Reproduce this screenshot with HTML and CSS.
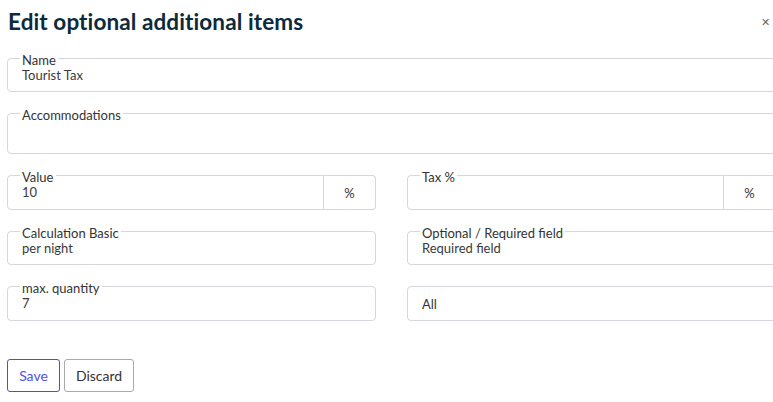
FILE: index.html
```html
<!DOCTYPE html>
<html>
<head>
<meta charset="utf-8">
<link rel="stylesheet" href="styles.css">
</head>
<body>
<div class="dialog">
  <div class="header">
    <h1 class="title">Edit optional additional items</h1>
    <span class="close">&#x2715;</span>
  </div>
  <div class="form">
    <fieldset class="field full">
      <legend>Name</legend>
      <div class="value">Tourist Tax</div>
    </fieldset>
    <fieldset class="field full tall">
      <legend>Accommodations</legend>
      <div class="value"></div>
    </fieldset>
    <div class="group">
      <fieldset class="field grow">
        <legend>Value</legend>
        <div class="value">10</div>
      </fieldset>
      <div class="addon">%</div>
    </div>
    <div class="group">
      <fieldset class="field grow">
        <legend>Tax %</legend>
        <div class="value"></div>
      </fieldset>
      <div class="addon">%</div>
    </div>
    <fieldset class="field">
      <legend>Calculation Basic</legend>
      <div class="value">per night</div>
    </fieldset>
    <fieldset class="field">
      <legend>Optional / Required field</legend>
      <div class="value">Required field</div>
    </fieldset>
    <fieldset class="field">
      <legend>max. quantity</legend>
      <div class="value">7</div>
    </fieldset>
    <div class="plain">All</div>
  </div>
  <div class="actions">
    <button class="btn save">Save</button>
    <button class="btn discard">Discard</button>
  </div>
</div>
</body>
</html>
```
FILE: styles.css
```css
html, body {
  margin: 0;
  padding: 0;
  overflow: hidden;
  background: #fff;
}
body {
  font-family: "Lato", "Open Sans", sans-serif;
  color: #333;
}
.dialog {
  width: 769px;
  padding-left: 7px;
}
.header {
  display: flex;
  justify-content: space-between;
  align-items: center;
  height: 44px;
  padding-right: 6px;
  margin-bottom: 5px;
}
.title {
  margin: 0 0 0 1px;
  font-size: 22.5px;
  font-weight: 700;
  color: #0c2a3b;
  line-height: 26px;
  letter-spacing: 0.1px;
}
.close {
  font-size: 11px;
  color: #666;
  line-height: 12px;
  margin-top: -1px;
}
.form {
  display: grid;
  grid-template-columns: 369px 369px;
  column-gap: 31px;
  row-gap: 12px;
}
.full {
  grid-column: 1 / 3;
}
.field {
  margin: 0;
  padding: 0 12px 8px;
  border: 1px solid #d6d6dc;
  border-radius: 4px;
  min-width: 0;
}
.field legend {
  padding: 4px 2px 0;
  font-size: 13px;
  line-height: 14px;
  color: #333;
}
.value {
  padding: 0 2px;
  font-size: 13px;
  line-height: 16px;
  height: 16px;
  color: #3a3a3a;
}
.tall .value {
  height: 23px;
}
.group {
  display: flex;
}
.grow {
  flex: 1;
  border-radius: 4px 0 0 4px;
}
.addon {
  width: 52px;
  margin-top: 9px;
  padding-top: 1px;
  box-sizing: border-box;
  height: 35px;
  border: 1px solid #d6d6dc;
  border-left: none;
  border-radius: 0 4px 4px 0;
  display: flex;
  align-items: center;
  justify-content: center;
  font-size: 13px;
  color: #333;
}
.plain {
  margin-top: 9px;
  height: 33px;
  border: 1px solid #d6d6dc;
  border-radius: 4px;
  padding: 0 14px;
  display: flex;
  align-items: center;
  font-size: 13px;
}
.actions {
  display: flex;
  gap: 4px;
  margin-top: 38px;
}
.btn {
  font-family: "Lato", "Open Sans", sans-serif;
  font-size: 14px;
  height: 33px;
  padding: 0 10px;
  background: #fff;
  border-radius: 3px;
  cursor: pointer;
}
.save {
  border: 1px solid #4b4bea;
  color: #4f4ff0;
  width: 53px;
}
.discard {
  border: 1px solid #a9a9a9;
  color: #333;
  width: 70px;
}
```
